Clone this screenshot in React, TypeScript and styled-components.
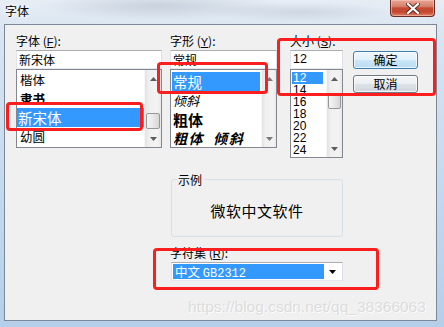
import React from "react";
import styled, { createGlobalStyle } from "styled-components";

const GlobalStyle = createGlobalStyle`
  html, body { margin: 0; padding: 0; }
  body {
    width: 444px; height: 327px; overflow: hidden;
    font-family: "Noto Sans CJK SC", "Liberation Sans", sans-serif;
    font-size: 12px; color: #000;
  }
`;

const Frame = styled.div`
  position: relative;
  width: 444px;
  height: 327px;
  overflow: hidden;
  display: flex;
  flex-direction: column;
  background:
    radial-gradient(ellipse 120px 14px at 160px 6px, rgba(150,160,175,0.35), transparent),
    radial-gradient(ellipse 90px 10px at 300px 12px, rgba(160,170,185,0.3), transparent),
    linear-gradient(180deg, #e6edf5 0%, #d9e5f1 10%, #c3d8ee 60%, #b5cfea 100%);
`;

const TitleBar = styled.div`
  height: 24px;
  flex: none;
  display: flex;
  align-items: flex-start;
  justify-content: space-between;
  padding: 0 9px 0 5px;
`;

const TitleText = styled.span`
  font-size: 12px;
  line-height: 22px;
  color: #000;
  text-shadow: 0 0 4px #fff, 0 0 6px #fff;
`;

const CloseButton = styled.div`
  width: 45px;
  height: 17px;
  box-sizing: border-box;
  border: 1px solid #6b2a22;
  border-top: none;
  border-radius: 0 0 4px 4px;
  background: linear-gradient(180deg, #e6a694 0%, #d7806b 40%, #c34a33 50%, #c5462f 75%, #dc8366 100%);
  box-shadow: inset 0 0 0 1px rgba(255,210,200,0.5);
  display: flex;
  align-items: center;
  justify-content: center;
`;

const Panel = styled.div`
  margin-left: 4px;
  width: 433px;
  height: 297px;
  box-sizing: border-box;
  border: 1px solid #7a8898;
  background: #f0f0f0;
  padding: 7px 0 0 11px;
  display: flex;
  flex-direction: column;
`;

const TopRow = styled.div`
  display: flex;
  align-items: flex-start;
`;

const Column = styled.div<{ $w: number; $ml: number }>`
  width: ${(p) => p.$w}px;
  margin-left: ${(p) => p.$ml}px;
  display: flex;
  flex-direction: column;
`;

const FieldLabel = styled.div<{ $ml?: number }>`
  height: 18px;
  line-height: 18px;
  font-size: 12px;
  white-space: nowrap;
  margin-left: ${(p) => p.$ml ?? 0}px;
  & u { text-decoration: underline; font-family: "Liberation Sans", sans-serif; font-size: 11px; }
`;

const TextBox = styled.div<{ $latin?: boolean }>`
  height: 19px;
  box-sizing: border-box;
  border: 1px solid #abadb3;
  border-color: #abadb3 #dbdfe6 #e3e9ef #e2e3ea;
  background: #fff;
  padding-left: 2px;
  font-family: ${(p) => (p.$latin ? `"Liberation Sans", sans-serif` : `"Noto Sans CJK SC", sans-serif`)};
  font-size: ${(p) => (p.$latin ? 12.5 : 12)}px;
  line-height: 17px;
`;

const ListBox = styled.div<{ $h: number }>`
  height: ${(p) => p.$h}px;
  box-sizing: border-box;
  border: 1px solid #828790;
  background: #fff;
  display: flex;
  overflow: hidden;
`;

const Items = styled.div<{ $pt: number; $px: number }>`
  flex: 1;
  min-width: 0;
  overflow: hidden;
  padding: ${(p) => p.$pt}px ${(p) => p.$px}px 0 ${(p) => p.$px}px;
  display: flex;
  flex-direction: column;
`;

const Row = styled.div<{
  $h: number;
  $size: number;
  $weight?: number;
  $italic?: boolean;
  $latin?: boolean;
  $selected?: boolean;
  $pl: number;
  $mr?: number;
  $ls?: number;
}>`
  flex: none;
  height: ${(p) => p.$h}px;
  line-height: ${(p) => p.$h}px;
  padding-left: ${(p) => p.$pl}px;
  margin-right: ${(p) => p.$mr ?? 0}px;
  white-space: pre;
  overflow: hidden;
  font-size: ${(p) => p.$size}px;
  font-weight: ${(p) => p.$weight ?? 400};
  font-style: ${(p) => (p.$italic ? "italic" : "normal")};
  letter-spacing: ${(p) => p.$ls ?? 0}px;
  font-family: ${(p) => (p.$latin ? `"Liberation Sans", sans-serif` : `"Noto Sans CJK SC", sans-serif`)};
  background: ${(p) => (p.$selected ? "#3399ff" : "transparent")};
  color: ${(p) => (p.$selected ? "#fff" : "#000")};
`;

const ScrollBar = styled.div<{ $w: number }>`
  width: ${(p) => p.$w}px;
  flex: none;
  display: flex;
  flex-direction: column;
  background: linear-gradient(90deg, #e2e2e2 0%, #f0f0f0 25%, #f3f3f3 75%, #e9e9e9 100%);
  border-left: 1px solid #f7f7f7;
`;

const ArrowButton = styled.div`
  height: 17px;
  flex: none;
  display: flex;
  align-items: center;
  justify-content: center;
`;

const Rail = styled.div`
  flex: 1;
  display: flex;
  flex-direction: column;
`;

const Thumb = styled.div<{ $top: number; $h: number }>`
  margin: ${(p) => p.$top}px 1px 0 1px;
  height: ${(p) => p.$h}px;
  box-sizing: border-box;
  border: 1px solid #979797;
  border-radius: 2px;
  background: linear-gradient(90deg, #f5f5f5 0%, #e8e8e8 50%, #d6d6d6 100%);
`;

const ButtonColumn = styled.div`
  width: 65px;
  margin-left: 10px;
  padding-top: 19px;
  display: flex;
  flex-direction: column;
  gap: 6px;
`;

const DialogButton = styled.div<{ $default?: boolean }>`
  height: 18px;
  box-sizing: border-box;
  border: 1px solid ${(p) => (p.$default ? "#3c7fb1" : "#707a86")};
  border-radius: 3px;
  background: ${(p) =>
    p.$default
      ? "linear-gradient(180deg, #eef7fd 0%, #e2f1fb 48%, #cbe6f7 52%, #b9dcf2 100%)"
      : "linear-gradient(180deg, #f4f6f8 0%, #eceff2 48%, #dde2e7 52%, #cfd6dd 100%)"};
  box-shadow: inset 0 0 0 1px rgba(255,255,255,0.7);
  display: flex;
  align-items: center;
  justify-content: center;
  font-size: 12px;
  line-height: 16px;
`;

const Lower = styled.div`
  margin-left: 155px;
  margin-top: 21px;
  width: 172px;
  display: flex;
  flex-direction: column;
`;

const GroupBox = styled.div`
  height: 58px;
  box-sizing: border-box;
  border: 1px solid #d5dfe5;
  border-radius: 3px;
  display: flex;
  flex-direction: column;
`;

const GroupLabel = styled.div`
  align-self: flex-start;
  margin: -8px 0 0 5px;
  padding: 0 2px 0 1px;
  background: #f0f0f0;
  font-size: 12px;
  line-height: 15px;
`;

const SampleText = styled.div`
  flex: 1;
  display: flex;
  align-items: center;
  justify-content: center;
  padding-bottom: 2px;
  font-size: 15px;
  letter-spacing: 0.5px;
`;

const CharsetLabel = styled(FieldLabel)`
  margin-top: 6px;
  height: 19px;
  line-height: 19px;
`;

const Combo = styled.div`
  height: 19px;
  box-sizing: border-box;
  border: 1px solid #abadb3;
  border-color: #abadb3 #dbdfe6 #e3e9ef #e2e3ea;
  background: #fff;
  display: flex;
  align-items: center;
  padding: 0 6px 0 1px;
  gap: 5px;
`;

const ComboValue = styled.div`
  flex: 1;
  height: 15px;
  line-height: 15px;
  background: #3399ff;
  color: #fff;
  padding-left: 2px;
  font-size: 12.5px;
  white-space: pre;
  & span { font-family: "Liberation Mono", monospace; font-size: 12px; }
`;

const Annotation = styled.div<{ $x: number; $y: number; $w: number; $h: number }>`
  position: absolute;
  left: ${(p) => p.$x}px;
  top: ${(p) => p.$y}px;
  width: ${(p) => p.$w}px;
  height: ${(p) => p.$h}px;
  box-sizing: border-box;
  border: 3px solid #fa1e1e;
  border-radius: 4px;
  pointer-events: none;
`;

const Watermark = styled.div`
  position: absolute;
  left: 188px;
  top: 299px;
  font-family: "Liberation Sans", sans-serif;
  font-size: 15.5px;
  line-height: 1;
  color: rgba(210, 210, 210, 0.7);
  text-shadow: 1px 1px 0 rgba(255,255,255,0.8);
  white-space: nowrap;
  pointer-events: none;
`;

const Arrow = ({ up, color }: { up?: boolean; color: string }) => (
  <svg width="7" height="4" viewBox="0 0 7 4">
    <polygon points={up ? "0,4 3.5,0 7,4" : "0,0 7,0 3.5,4"} fill={color} />
  </svg>
);

const Scroll = ({ w, thumb, color = "#5c5c5c" }: { w: number; thumb?: [number, number]; color?: string }) => (
  <ScrollBar $w={w}>
    <ArrowButton>
      <Arrow up color={color} />
    </ArrowButton>
    <Rail>{thumb && <Thumb $top={thumb[0]} $h={thumb[1]} />}</Rail>
    <ArrowButton>
      <Arrow color={color} />
    </ArrowButton>
  </ScrollBar>
);

const fonts = [
  { name: "楷体", size: 12.5 },
  { name: "隶书", size: 12.5, weight: 700 },
  { name: "新宋体", size: 14.5, selected: true },
  { name: "幼圆", size: 12.5 },
];

const styles = [
  { name: "常规", size: 14.5, selected: true },
  { name: "倾斜", size: 13, italic: true },
  { name: "粗体", size: 15, weight: 700 },
  { name: "粗体  倾斜", size: 14, weight: 700, italic: true, ls: 1.5 },
];

const sizes = ["12", "14", "16", "18", "20", "22", "24"];

export default function App() {
  return (
    <>
      <GlobalStyle />
      <Frame>
        <TitleBar>
          <TitleText>字体</TitleText>
          <CloseButton>
            <svg width="14" height="11" viewBox="0 0 14 11">
              <path d="M2 1 L12 10 M12 1 L2 10" stroke="#5a2a24" strokeWidth="4" strokeLinecap="square" />
              <path d="M2 1 L12 10 M12 1 L2 10" stroke="#fff" strokeWidth="2.2" strokeLinecap="square" />
            </svg>
          </CloseButton>
        </TitleBar>
        <Panel>
          <TopRow>
            <Column $w={146} $ml={0}>
              <FieldLabel>
                字体 (<u>F</u>):
              </FieldLabel>
              <TextBox>新宋体</TextBox>
              <ListBox $h={79}>
                <Items $pt={0} $px={0}>
                  {fonts.map((f) => (
                    <Row key={f.name} $h={19} $size={f.size} $weight={f.weight} $selected={f.selected} $pl={f.selected ? 1 : 3}>
                      {f.name}
                    </Row>
                  ))}
                </Items>
                <Scroll w={16} thumb={[26, 16]} />
              </ListBox>
            </Column>
            <Column $w={107} $ml={8}>
              <FieldLabel>
                字形 (<u>Y</u>):
              </FieldLabel>
              <TextBox>常规</TextBox>
              <ListBox $h={79}>
                <Items $pt={2} $px={1}>
                  {styles.map((s) => (
                    <Row
                      key={s.name}
                      $h={19}
                      $size={s.size}
                      $weight={s.weight}
                      $italic={s.italic}
                      $selected={s.selected}
                      $ls={s.ls}
                      $pl={1}
                    >
                      {s.name}
                    </Row>
                  ))}
                </Items>
                <Scroll w={14} color="#7a7a7a" />
              </ListBox>
            </Column>
            <Column $w={53} $ml={13}>
              <FieldLabel>
                大小 (<u>S</u>):
              </FieldLabel>
              <TextBox $latin>12</TextBox>
              <ListBox $h={89}>
                <Items $pt={2} $px={1}>
                  {sizes.map((s, i) => (
                    <Row key={s} $h={12} $size={12} $latin $selected={i === 0} $pl={1} $mr={2}>
                      {s}
                    </Row>
                  ))}
                </Items>
                <Scroll w={15} thumb={[6, 16]} />
              </ListBox>
            </Column>
            <ButtonColumn>
              <DialogButton $default>确定</DialogButton>
              <DialogButton>取消</DialogButton>
            </ButtonColumn>
          </TopRow>
          <Lower>
            <GroupBox>
              <GroupLabel>示例</GroupLabel>
              <SampleText>微软中文软件</SampleText>
            </GroupBox>
            <CharsetLabel $ml={-1}>
              字符集 (<u>R</u>):
            </CharsetLabel>
            <Combo>
              <ComboValue>
                中文 <span>GB2312</span>
              </ComboValue>
              <Arrow color="#000" />
            </Combo>
          </Lower>
        </Panel>
        <Annotation $x={6} $y={102} $w={137} $h={29} />
        <Annotation $x={157} $y={62} $w={111} $h={32} />
        <Annotation $x={277} $y={38} $w={159} $h={58} />
        <Annotation $x={153} $y={248} $w={226} $h={42} />
        <Watermark>https://blog.csdn.net/qq_38366063</Watermark>
      </Frame>
    </>
  );
}
